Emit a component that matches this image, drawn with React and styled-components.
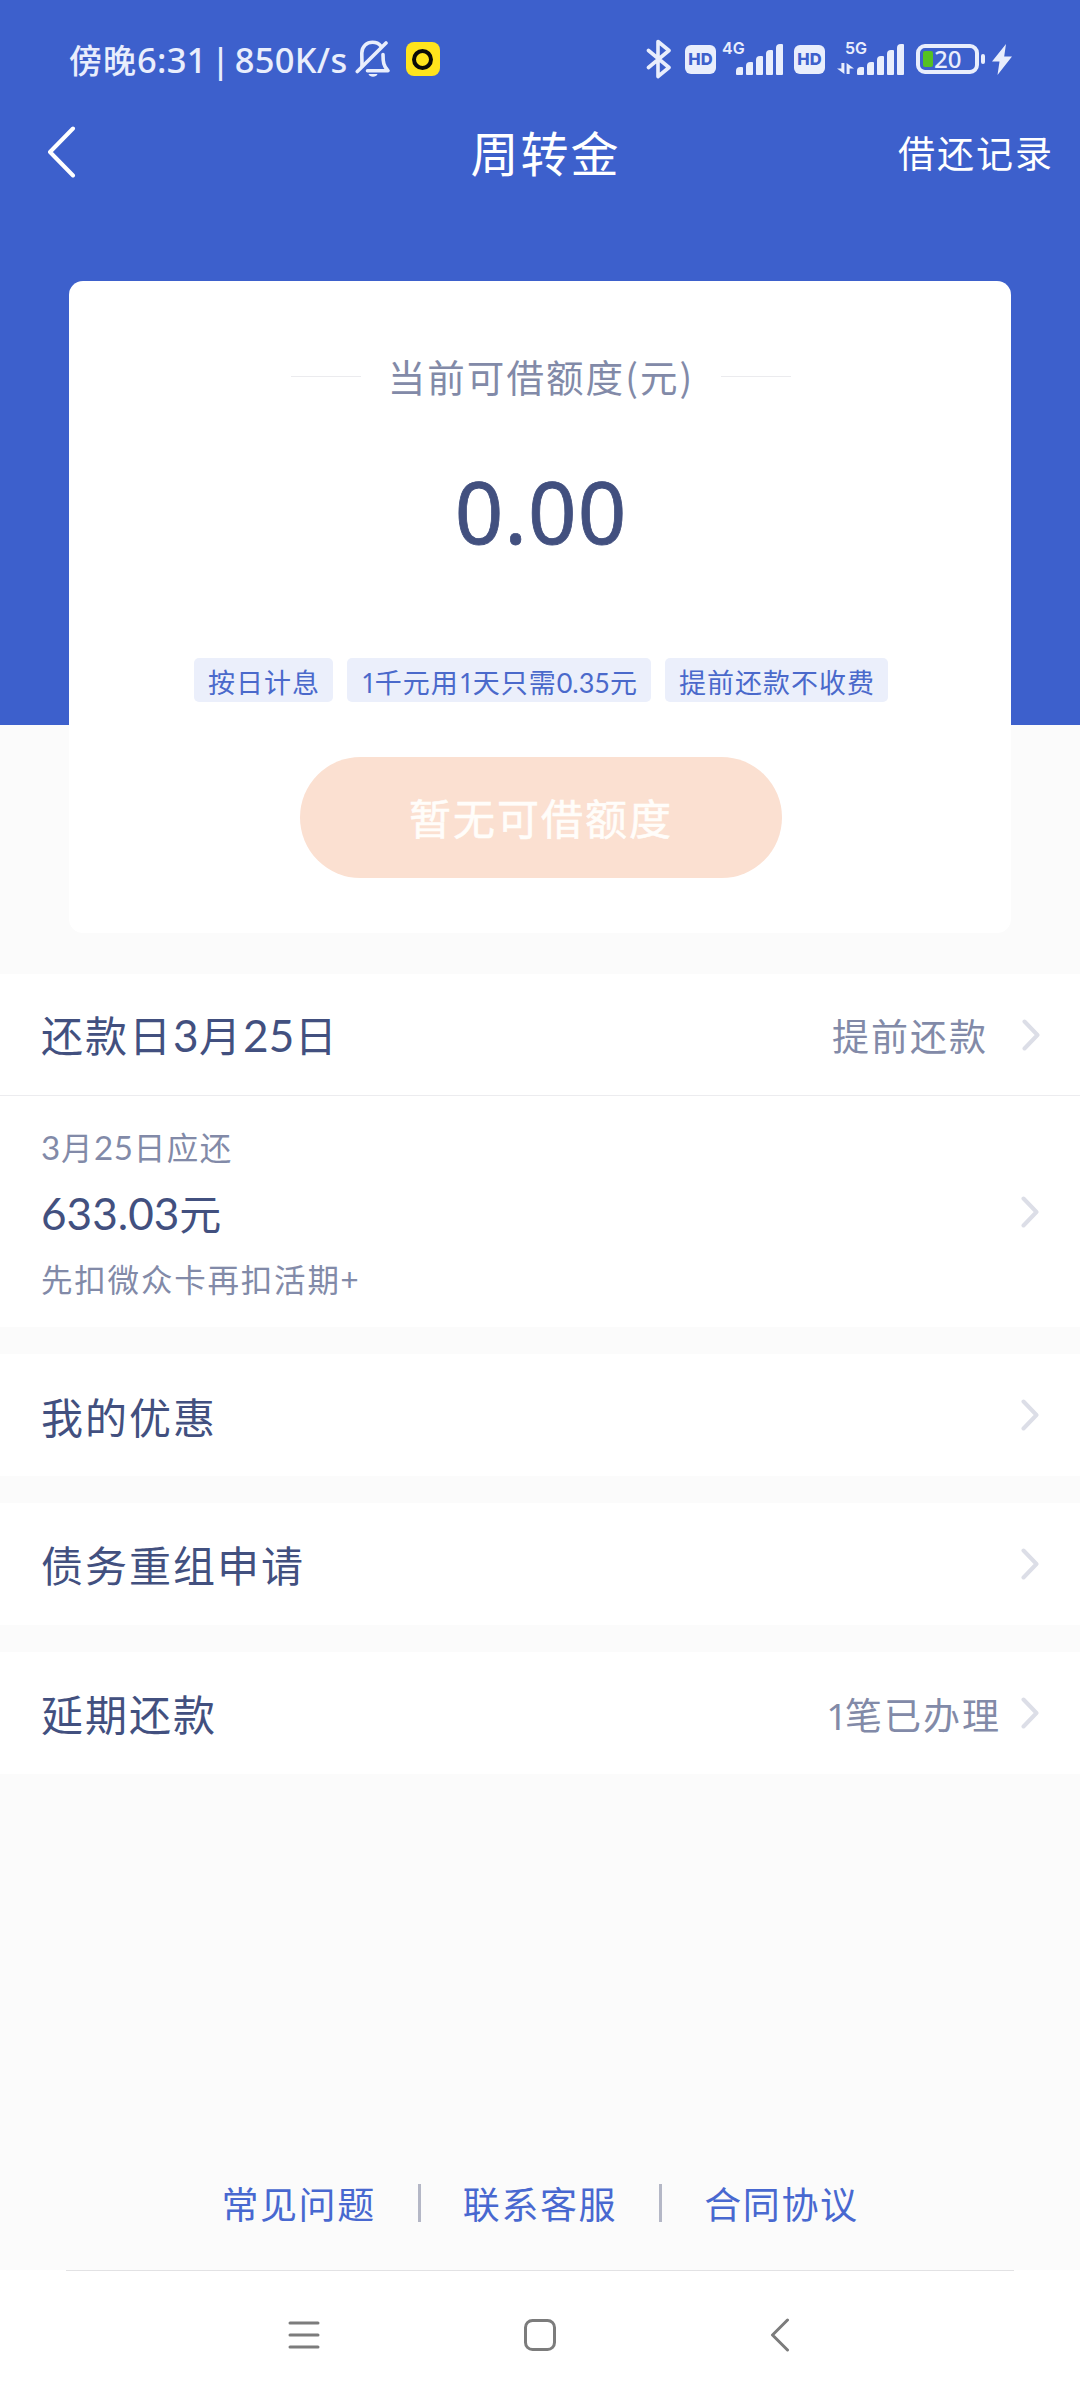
import React from "react";
import styled, { createGlobalStyle } from "styled-components";

const blue = "#3d60cc";
const ink = "#42507f";
const muted = "#828aa8";
const status = "#e9eefc";

const GlobalStyle = createGlobalStyle`
  *, *::before, *::after { box-sizing: border-box; }
  body {
    margin: 0;
    background: #fbfbfb;
    font-family: "Noto Sans CJK SC", "Noto Sans", sans-serif;
  }
`;

const Page = styled.div`
  width: 1080px;
  height: 2400px;
  display: flex;
  flex-direction: column;
  background: #fbfbfb;
  overflow: hidden;
`;

const Header = styled.header`
  height: 725px;
  flex: none;
  background: ${blue};
  color: #fff;
`;

const StatusBar = styled.div`
  height: 118px;
  padding: 0 68px 0 69px;
  display: flex;
  align-items: center;
  justify-content: space-between;
  color: ${status};
`;

const StatusGroup = styled.div`
  display: flex;
  align-items: center;
`;

const Clock = styled.span`
  font-size: 33px;
  font-weight: 500;
  line-height: 40px;
  letter-spacing: 1px;
  word-spacing: -5px;
  white-space: nowrap;
`;

const Latin = styled.span`
  font-family: "Noto Sans", sans-serif;
  font-size: ${(p) => p.$size || "1em"};
  line-height: 1;
  letter-spacing: ${(p) => p.$track || "0"};
`;

const Figures = styled.span`
  font-family: Lato, sans-serif;
  font-size: ${(p) => p.$size || "1.05em"};
  line-height: 1;
  letter-spacing: ${(p) => p.$track || "0"};
`;

const Bell = styled.svg`
  margin-left: 7px;
`;

const AppBadge = styled.span`
  width: 34px;
  height: 34px;
  margin-left: 15px;
  border-radius: 8px;
  background: #ffe41c;
  display: flex;
  align-items: center;
  justify-content: center;

  &::after {
    content: "";
    width: 21px;
    height: 21px;
    border: 4px solid #0b0b08;
    border-radius: 50%;
  }
`;

const HdBadge = styled.span`
  width: 31px;
  height: 29px;
  margin-left: ${(p) => p.$gap}px;
  border-radius: 6px;
  background: ${status};
  color: ${blue};
  font: 800 16.5px/29px Inter, sans-serif;
  text-align: center;
`;

const Signal = styled.div`
  width: ${(p) => p.$width}px;
  height: 36px;
  margin-left: ${(p) => p.$gap}px;
  display: flex;
  justify-content: space-between;
`;

const Network = styled.div`
  display: flex;
  flex-direction: column;
  justify-content: space-between;
  align-items: flex-end;
  height: 33px;
  margin-right: -10px;
  font: 600 16px/14px Inter, sans-serif;
`;

const NetworkArrows = styled.svg`
  margin-right: 13px;
`;

const Bars = styled.div`
  display: flex;
  align-items: flex-end;
  gap: 3px;
  height: 33.5px;
`;

const Bar = styled.i`
  width: 7px;
  height: ${(p) => p.$height}px;
  border-radius: 4px 1px 1px 1px;
  background: ${status};
`;

const Battery = styled.div`
  width: 63px;
  height: 30px;
  margin-left: 13px;
  padding-left: 3px;
  border: 4px solid ${status};
  border-radius: 9px;
  display: flex;
  align-items: center;
  font: 500 24px/22px "Noto Sans", sans-serif;

  &::before {
    content: "";
    width: 10px;
    height: 16px;
    margin-right: 1px;
    border-radius: 2px;
    background: #55c122;
  }
`;

const BatteryTip = styled.i`
  width: 4px;
  height: 10px;
  margin-left: 2px;
  border-radius: 2px;
  background: ${status};
`;

const Bolt = styled.svg`
  margin-left: 7px;
`;

const NavBar = styled.nav`
  height: 68px;
  padding: 0 26px 0 46px;
  display: grid;
  grid-template-columns: 1fr auto 1fr;
  align-items: center;
`;

const Title = styled.h1`
  margin: -3px 0 0;
  padding-right: 9px;
  font-size: 48px;
  font-weight: 400;
  line-height: 68px;
  letter-spacing: 2px;
`;

const Records = styled.a`
  justify-self: end;
  font-size: 37px;
  line-height: 68px;
  letter-spacing: 2px;
`;

const CreditCard = styled.section`
  position: relative;
  height: 652px;
  margin: -444px 69px 41px;
  padding: 68px 0 0 2px;
  flex: none;
  border-radius: 14px;
  background: #fff;
  display: flex;
  flex-direction: column;
  align-items: center;
`;

const Caption = styled.div`
  width: 500px;
  height: 54px;
  display: flex;
  align-items: center;
  justify-content: space-between;
  color: ${muted};
  font-size: 37.5px;
  line-height: 54px;
  letter-spacing: 2.1px;

  &::before,
  &::after {
    content: "";
    width: 70px;
    height: 1px;
    background: #ebebee;
  }
`;

const Amount = styled.div`
  height: 100px;
  margin: 58px 0 2px;
  color: ${ink};
  font: 400 85px/100px "Noto Sans", sans-serif;
  letter-spacing: 1px;
  -webkit-text-stroke: 0.8px ${ink};
`;

const Tags = styled.div`
  margin-top: 95px;
  display: flex;
  gap: 14px;
`;

const Tag = styled.span`
  height: 44px;
  padding: 2px 13px 0 14px;
  border-radius: 5px;
  background: #ebeffb;
  color: #4a69cb;
  font-size: 27px;
  line-height: 44px;
  letter-spacing: 1px;
  white-space: nowrap;
`;

const BorrowButton = styled.button`
  width: 482px;
  height: 121px;
  margin-top: 55px;
  padding: 0 0 2px;
  border: 0;
  border-radius: 61px;
  background: #fbe0d1;
  color: #fffdfa;
  font-family: inherit;
  font-size: 42px;
  font-weight: 400;
  line-height: 118px;
  letter-spacing: 2px;
  -webkit-text-stroke: 0.6px #fffdfa;
`;

const Group = styled.section`
  flex: none;
  margin-bottom: 27px;
  background: #fff;
`;

const Row = styled.div`
  height: ${(p) => p.$height || 122}px;
  padding: 0 ${(p) => (p.$divided ? 40 : 41)}px 0 41px;
  display: flex;
  align-items: center;
  color: ${ink};
  font-size: 42px;
  letter-spacing: 2px;
  border-bottom: ${(p) => (p.$divided ? "1px solid #ececef" : "0")};
`;

const RowLabel = styled.span`
  height: 60px;
  margin-top: ${(p) => p.$lift || 0}px;
  line-height: 60px;
  flex: 1;
  white-space: nowrap;
`;

const RowValue = styled.span`
  height: 54px;
  margin-top: ${(p) => p.$lift || 0}px;
  margin-right: ${(p) => p.$gap}px;
  color: ${muted};
  font-size: 37px;
  line-height: 54px;
  letter-spacing: 2px;
`;

const Due = styled.div`
  flex: 1;
  display: flex;
  flex-direction: column;
`;

const DueNote = styled.span`
  height: 46px;
  color: ${muted};
  font-size: 31.5px;
  line-height: 46px;
  letter-spacing: ${(p) => p.$track || "1.6px"};
`;

const DueAmount = styled.span`
  height: 60px;
  margin: 13px 0;
  line-height: 60px;
  letter-spacing: 0;
`;

const Footer = styled.footer`
  flex: none;
  height: 54px;
  margin-top: auto;
  display: flex;
  align-items: center;
  justify-content: center;
  gap: 42px;
`;

const FooterLink = styled.a`
  color: #4868d0;
  font-size: 37px;
  line-height: 54px;
  letter-spacing: 1.6px;
`;

const Separator = styled.i`
  width: 3px;
  height: 38px;
  background: #b4b7c6;
`;

const SystemBar = styled.div`
  flex: none;
  height: 130px;
  margin-top: 40px;
  padding: 0 66px;
  background: #fff;
  display: flex;
  flex-direction: column;

  &::before {
    content: "";
    height: 1px;
    background: #e2e2e4;
  }
`;

const SystemKeys = styled.div`
  flex: 1;
  padding: 0 0 2px 222px;
  display: flex;
  align-items: center;
  gap: 204px;
`;

function Chevron() {
  return (
    <svg width="18" height="32" viewBox="0 0 18 32" fill="none" stroke="#dcdee7" strokeWidth="4" strokeLinecap="round" strokeLinejoin="round">
      <path d="M2.5 2.5 15.5 16 2.5 29.5" />
    </svg>
  );
}

function SignalBars() {
  return (
    <Bars>
      {[8, 13, 19, 25, 30.5].map((h) => (
        <Bar key={h} $height={h} />
      ))}
    </Bars>
  );
}

export default function App() {
  return (
    <Page>
      <GlobalStyle />
      <Header>
        <StatusBar>
          <StatusGroup>
            <Clock>
              傍晚<Latin $size="34.5px" $track="0.3px">6:31 | 850K/s</Latin>
            </Clock>
            <Bell width="36" height="38" viewBox="0 0 36 38" fill="none" stroke={status} strokeWidth="3.6" strokeLinecap="round" strokeLinejoin="round">
              <path d="M2.3 31.5 31 3" />
              <path d="M7 26 C7 21 6.8 17 6.8 13 C7 6 12 2.3 17.5 2.3 C21 2.3 24 3.6 25.8 6" />
              <path d="M28 14.5 C28 22 28.6 26 33 30.7 H12.5" />
              <path d="M13.5 34 H22.5 C21.6 37.6 14.4 37.6 13.5 34Z" fill={status} stroke="none" />
            </Bell>
            <AppBadge />
          </StatusGroup>
          <StatusGroup>
            <svg width="26" height="40" viewBox="0 0 26 40" fill="none" stroke={status} strokeWidth="3.6" strokeLinecap="round" strokeLinejoin="round">
              <path d="M2.5 11.5 23 28.5 12 37.5 V2.5 L23 11.5 2.5 28.5" />
            </svg>
            <HdBadge $gap={13}>HD</HdBadge>
            <Signal $width={61} $gap={6}>
              <Network>4G</Network>
              <SignalBars />
            </Signal>
            <HdBadge $gap={11}>HD</HdBadge>
            <Signal $width={66} $gap={12}>
              <Network>
                5G
                <NetworkArrows width="17" height="11" viewBox="0 0 17 11" fill={status}>
                  <path d="M4.4 0H7.4V11L0 5.6H4.4Z" />
                  <path d="M12.6 11H9.6V0L17 5.4H12.6Z" />
                </NetworkArrows>
              </Network>
              <SignalBars />
            </Signal>
            <Battery>20</Battery>
            <BatteryTip />
            <Bolt width="20" height="31" viewBox="0 0 20 31" fill={status}>
              <path d="M14 0 0 17.5H7.5L5.5 31 20 12.5H12.2Z" />
            </Bolt>
          </StatusGroup>
        </StatusBar>
        <NavBar>
          <svg width="30" height="52" viewBox="0 0 30 52" fill="none" stroke="#fff" strokeWidth="4" strokeLinecap="round" strokeLinejoin="round">
            <path d="M27 2.5 4 26 27 49.5" />
          </svg>
          <Title>周转金</Title>
          <Records>借还记录</Records>
        </NavBar>
      </Header>

      <CreditCard>
        <Caption>当前可借额度(元)</Caption>
        <Amount>0.00</Amount>
        <Tags>
          <Tag>按日计息</Tag>
          <Tag>
            <Latin $track="-1.6px">1</Latin>千元用<Latin $track="-1.6px">1</Latin>天只需<Figures $size="1em">0.35</Figures>元
          </Tag>
          <Tag>提前还款不收费</Tag>
        </Tags>
        <BorrowButton>暂无可借额度</BorrowButton>
      </CreditCard>

      <Group>
        <Row $divided>
          <RowLabel $lift={-2}>
            还款日<Figures $track="0.3px">3</Figures>月<Figures $track="0.3px">25</Figures>日
          </RowLabel>
          <RowValue $gap={34}>提前还款</RowValue>
          <Chevron />
        </Row>
        <Row $height={231}>
          <Due>
            <DueNote $track="1.4px">
              <Figures $track="0.8px">3</Figures>月<Figures $track="0.8px">25</Figures>日应还
            </DueNote>
            <DueAmount>
              <Figures>633.03</Figures>元
            </DueAmount>
            <DueNote $track="1.8px">先扣微众卡再扣活期+</DueNote>
          </Due>
          <Chevron />
        </Row>
      </Group>
      <Group>
        <Row>
          <RowLabel $lift={2}>我的优惠</RowLabel>
          <Chevron />
        </Row>
      </Group>
      <Group>
        <Row>
          <RowLabel>债务重组申请</RowLabel>
          <Chevron />
        </Row>
      </Group>
      <Group>
        <Row>
          <RowLabel>延期还款</RowLabel>
          <RowValue $gap={20} $lift={2}>
            <Latin $track="-2.5px">1</Latin>笔已办理
          </RowValue>
          <Chevron />
        </Row>
      </Group>

      <Footer>
        <FooterLink>常见问题</FooterLink>
        <Separator />
        <FooterLink>联系客服</FooterLink>
        <Separator />
        <FooterLink>合同协议</FooterLink>
      </Footer>

      <SystemBar>
        <SystemKeys>
          <svg width="32" height="32" viewBox="0 0 32 32" stroke="#7c7c7c" strokeWidth="3" strokeLinecap="round">
            <path d="M2 4H30M2 16H30M2 28H30" />
          </svg>
          <svg width="32" height="32" viewBox="0 0 32 32" fill="none" stroke="#7c7c7c" strokeWidth="3">
            <rect x="1.5" y="1.5" width="29" height="29" rx="7" />
          </svg>
          <svg width="40" height="34" viewBox="-10 0 40 34" fill="none" stroke="#7c7c7c" strokeWidth="3" strokeLinecap="round" strokeLinejoin="round">
            <path d="M17.5 2 2.5 17 17.5 32" />
          </svg>
        </SystemKeys>
      </SystemBar>
    </Page>
  );
}
